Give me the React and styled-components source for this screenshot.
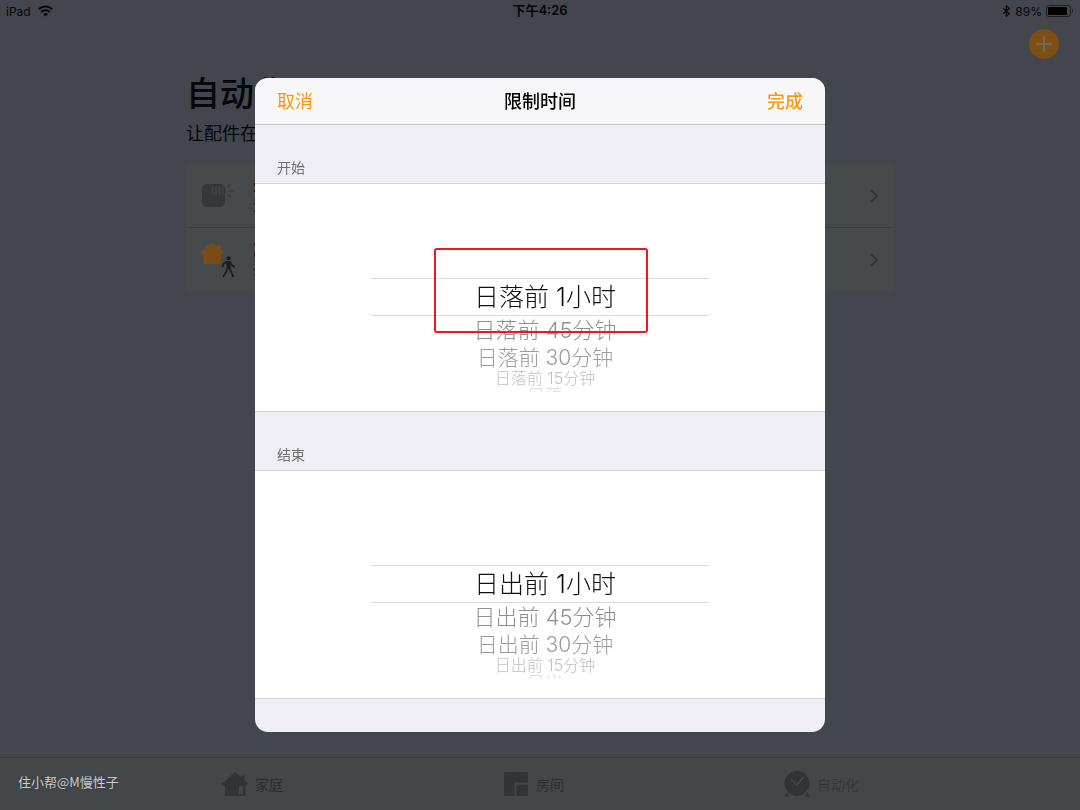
import React, { useState } from 'react'
import styled, { createGlobalStyle } from 'styled-components'

const offsets = ['1小时', '45分钟', '30分钟', '15分钟']

function WifiIcon() {
    return (
        <svg width="15" height="12" viewBox="0 0 15 12" fill="none" stroke="#05070b" strokeWidth="2">
            <path d="M0.8 4.3a9.6 9.6 0 0 1 13.4 0" />
            <path d="M3.2 7a6.1 6.1 0 0 1 8.6 0" />
            <path d="M7.5 11.6L5.1 9.1a3.5 3.5 0 0 1 4.8 0z" fill="#05070b" stroke="none" />
        </svg>
    )
}

function BluetoothIcon() {
    return (
        <svg width="9" height="12" viewBox="0 0 9 12" fill="none" stroke="#05070b" strokeWidth="1.2">
            <path d="M1.2 3.4L7.2 8.6 4.4 11.2V0.8L7.2 3.4 1.2 8.6" />
        </svg>
    )
}

function BatteryIcon() {
    return (
        <svg width="28" height="12" viewBox="0 0 28 12">
            <rect x="0.5" y="0.5" width="24" height="11" rx="2.5" fill="none" stroke="#1c1e22" />
            <rect x="2" y="2" width="19" height="8" rx="1" fill="#000" />
            <path d="M26 4v4c1.4-.6 1.4-3.4 0-4z" fill="#1c1e22" />
        </svg>
    )
}

function SensorIcon() {
    return (
        <svg width="36" height="40" viewBox="0 0 36 40">
            <rect x="2" y="8" width="23" height="23" rx="5" fill="#35383b" />
            <path d="M12.5 10v7M16 10v9M19.5 10v9M23 10v8" stroke="#44474a" strokeWidth="1.2" />
            <path d="M27.5 11l2.5-2.5M28.5 15h5M27.5 18.5l2.5 2.5" stroke="#35383b" strokeWidth="1.2" fill="none" />
        </svg>
    )
}

function LeaveHomeIcon() {
    return (
        <svg width="36" height="40" viewBox="0 0 36 40">
            <path d="M0 12.5L12 2.500l6 5V4.500h2.500v5l3 3-1 1H21V24H3.500V13.500H1z" fill="#774c16" />
            <circle cx="28.500" cy="18.200" r="2" fill="#1b1d21" />
            <path d="M26.200 21h4l0.600 7.500h-4.400z" fill="#1b1d21" />
            <path
                d="M26.600 21.800l-3 2-1 3M30 22l1.500 3 2.500 1.500M27.500 28l-1.300 4-2.700 4.200M29.200 28l2 4 2 4.500"
                fill="none"
                stroke="#1b1d21"
                strokeWidth="1.800"
                strokeLinecap="round"
                strokeLinejoin="round"
            />
        </svg>
    )
}

function HouseIcon() {
    return (
        <svg width="26" height="26" viewBox="0 0 26 26" fill="#303338">
            <path d="M0 13L13 1l6.500 5.500V4.500h3V9L26 12.500l-1 1.500h-1.500V25H3V14H1z" />
            <path d="M17 15h4v8h-4z" fill="#44474a" />
        </svg>
    )
}

function RoomIcon() {
    return (
        <svg width="26" height="26" viewBox="0 0 26 26">
            <rect x="1" y="1" width="24" height="24" rx="1" fill="#303338" />
            <path d="M12.500 25V12.500H25" stroke="#44474a" strokeWidth="1.800" fill="none" />
        </svg>
    )
}

function ClockIcon() {
    return (
        <svg width="26" height="26" viewBox="0 0 26 26">
            <circle cx="13" cy="12.500" r="12.500" fill="#303338" />
            <path d="M2.500 21L0.500 25.500h5zM23.500 21l2 4.500h-5z" fill="#303338" />
            <path d="M7.500 8.500l5 5.500 7.500-8.500" stroke="#44474a" strokeWidth="1.800" fill="none" />
        </svg>
    )
}

function Chevron() {
    return (
        <svg width="8" height="14" viewBox="0 0 8 14" fill="none" stroke="#303337" strokeWidth="1.800">
            <path d="M1 1l6 6-6 6" />
        </svg>
    )
}

function TimePicker({ label, event, marked }) {
    const [selected, setSelected] = useState(0)

    return (
        <>
            <SectionTitle>{label}</SectionTitle>
            <Picker>
                <Wheel role="listbox" aria-label={label}>
                    {offsets.map((item, i) => (
                        <WheelRow
                            key={item}
                            role="option"
                            aria-selected={selected === i}
                            $depth={i}
                            onClick={() => setSelected(i)}
                        >
                            {event}前 {item}
                        </WheelRow>
                    ))}
                    <WheelRow role="option" aria-selected={false} $depth={4}>{event}</WheelRow>
                    {marked && <Mark />}
                </Wheel>
            </Picker>
        </>
    )
}

function App() {
    return (
        <>
            <GlobalStyle />
            <Page>
                <StatusBar>
                    <StatusSide>
                        <span>iPad</span>
                        <WifiIcon />
                    </StatusSide>
                    <Clock>下午4:26</Clock>
                    <StatusSide $end>
                        <BluetoothIcon />
                        <span>89%</span>
                        <BatteryIcon />
                    </StatusSide>
                </StatusBar>
                <Toolbar>
                    <AddButton aria-label="添加">
                        <svg width="16" height="16" viewBox="0 0 16 16" stroke="#75695a" strokeWidth="2">
                            <path d="M8 0v16M0 8h16" />
                        </svg>
                    </AddButton>
                </Toolbar>
                <Content>
                    <Title>自动化</Title>
                    <Subtitle>让配件在</Subtitle>
                    <Card>
                        <CardRow>
                            <SensorIcon />
                            <CardText>
                                <strong>湿度</strong>
                                <span>浴室</span>
                            </CardText>
                            <Chevron />
                        </CardRow>
                        <CardRow>
                            <LeaveHomeIcon />
                            <CardText>
                                <strong>离家</strong>
                                <span>全部</span>
                            </CardText>
                            <Chevron />
                        </CardRow>
                    </Card>
                </Content>
                <TabBar>
                    <Tab href="#home"><HouseIcon />家庭</Tab>
                    <Tab href="#rooms"><RoomIcon />房间</Tab>
                    <Tab href="#automation" $active><ClockIcon />自动化</Tab>
                    <Watermark>住小帮@M慢性子</Watermark>
                </TabBar>
            </Page>
            <Backdrop>
                <Modal role="dialog" aria-labelledby="modal-title">
                    <ModalHeader>
                        <HeaderButton>取消</HeaderButton>
                        <ModalTitle id="modal-title">限制时间</ModalTitle>
                        <HeaderButton $done>完成</HeaderButton>
                    </ModalHeader>
                    <TimePicker label="开始" event="日落" marked />
                    <TimePicker label="结束" event="日出" />
                    <ModalFooter />
                </Modal>
            </Backdrop>
        </>
    )
}

export default App

const GlobalStyle = createGlobalStyle`
*{
    box-sizing:border-box;
}
body{
    margin:0;
    background-color:#43464d;
    font-family:Inter, "Noto Sans CJK SC", sans-serif;
}
button{
    font-family:inherit;
    border:none;
    background:none;
    padding:0;
    cursor:pointer;
}
`
const Page = styled.div`
min-height:100vh;
display:flex;
flex-direction:column;
color:#05070b;
`
const StatusBar = styled.header`
display:grid;
grid-template-columns:1fr auto 1fr;
align-items:center;
height:22px;
padding:0 6px;
font-size:12px;
`
const StatusSide = styled.div`
display:flex;
align-items:center;
gap:${props => props.$end ? '4px' : '7px'};
justify-content:${props => props.$end ? 'flex-end' : 'flex-start'};
`
const Clock = styled.div`
padding-bottom:2px;
font-size:13px;
line-height:18px;
font-weight:600;
`
const Toolbar = styled.div`
display:flex;
justify-content:flex-end;
padding:7px 21px 0;
height:44px;
`
const AddButton = styled.button`
width:30px;
height:30px;
border-radius:50%;
background-color:#7c4f12;
display:flex;
align-items:center;
justify-content:center;
`
const Content = styled.main`
flex:1;
width:100%;
max-width:708px;
margin:0 auto;
`
const Title = styled.h1`
margin:4px 0 0;
font-size:34px;
line-height:48px;
font-weight:500;
`
const Subtitle = styled.p`
margin:4px 0 18px;
font-size:18px;
line-height:24px;
`
const Card = styled.div`
border-radius:5px;
background-color:#474a4d;
`
const CardRow = styled.div`
display:flex;
align-items:center;
height:63px;
padding:0 16px 0 14px;
& + &{
    height:64px;
    border-top:1px solid #3a3d40;
}
`
const CardText = styled.div`
flex:1;
display:flex;
flex-direction:column;
margin-left:17px;
font-size:14px;
line-height:20px;
strong{
    font-weight:500;
}
`
const TabBar = styled.nav`
position:relative;
display:grid;
grid-template-columns:repeat(3, 281px);
align-items:center;
height:53px;
padding-left:222px;
border-top:1px solid #393c42;
background-color:#44474a;
overflow:hidden;
`
const Tab = styled.a`
display:flex;
align-items:center;
gap:7px;
font-size:14px;
text-decoration:none;
color:${props => props.$active ? '#35383b' : '#2a2d31'};
`
const Watermark = styled.span`
position:absolute;
left:18px;
top:14px;
font-family:"Noto Sans CJK SC", sans-serif;
font-size:13px;
line-height:20px;
color:#cdced0;
text-shadow:0 0 2px #2b2d30;
`
const Backdrop = styled.div`
position:fixed;
inset:0;
display:flex;
align-items:center;
justify-content:center;
`
const Modal = styled.div`
width:570px;
max-width:100%;
border-radius:13px;
overflow:hidden;
background-color:#efeef5;
`
const ModalHeader = styled.div`
display:grid;
grid-template-columns:1fr auto 1fr;
align-items:center;
height:47px;
padding:0 22px 2px;
background-color:#f7f7f9;
border-bottom:1px solid #c3c3c8;
`
const HeaderButton = styled.button`
justify-self:${props => props.$done ? 'end' : 'start'};
font-size:18px;
font-weight:${props => props.$done ? 500 : 400};
color:#fa980f;
`
const ModalTitle = styled.h2`
margin:0;
font-size:18px;
font-weight:500;
color:#000;
`
const SectionTitle = styled.h3`
display:flex;
align-items:flex-end;
height:59px;
margin:0;
padding:0 22px 5px;
border-bottom:1px solid #d4d4d9;
font-size:14px;
line-height:20px;
font-weight:400;
color:#6d6d72;
`
const Picker = styled.div`
height:228px;
padding-top:94px;
background-color:#fff;
border-bottom:1px solid #d4d4d9;
`
const Wheel = styled.ul`
position:relative;
max-width:338px;
margin:0 auto;
padding:0;
list-style:none;
font-weight:300;
`
// rows get smaller and paler as the wheel turns away
const rows = [
    { height: 38, line: 36, size: 25, color: '#111' },
    { height: 28, line: 28, size: 22, color: '#909090' },
    { height: 26, line: 28, size: 21, color: '#9c9c9c' },
    { height: 17, line: 17, size: 16, color: '#c0c0c0' },
    { height: 5, line: 18, size: 18, color: '#dcdcdc' },
]
const WheelRow = styled.li`
height:${props => rows[props.$depth].height}px;
line-height:${props => rows[props.$depth].line}px;
font-size:${props => rows[props.$depth].size}px;
color:${props => rows[props.$depth].color};
border:solid #dadadc;
border-width:${props => props.$depth === 0 ? '1px 0' : '0'};
overflow:${props => props.$depth === 4 ? 'hidden' : 'visible'};
padding-left:10px;
text-align:center;
white-space:nowrap;
cursor:pointer;
`
const Mark = styled.div`
position:absolute;
top:-30px;
left:63px;
width:214px;
height:85px;
border:2px solid #f0181c;
border-radius:3px;
pointer-events:none;
`
const ModalFooter = styled.div`
height:33px;
`
